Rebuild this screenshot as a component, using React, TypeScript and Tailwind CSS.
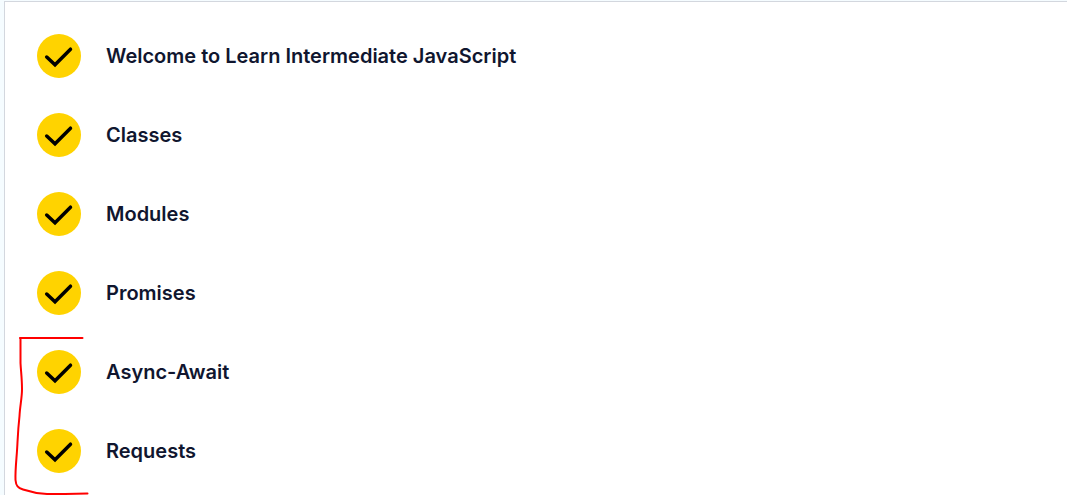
const modules: string[] = [
  'Welcome to Learn Intermediate JavaScript',
  'Classes',
  'Modules',
  'Promises',
  'Async-Await',
  'Requests',
];

function CheckBadge() {
  return (
    <svg className="size-11 shrink-0" viewBox="0 0 44 44" fill="none" role="img" aria-label="Completed">
      <circle cx="22" cy="22" r="22" fill="#ffd300" />
      <path
        d="M9.700 23L18 30.800L33.500 15.200"
        stroke="#000"
        strokeWidth="3.500"
        strokeLinecap="round"
        strokeLinejoin="miter"
      />
    </svg>
  );
}

function Bracket() {
  return (
    <svg
      className="pointer-events-none absolute top-[334px] left-2 h-[160px] w-20"
      viewBox="0 0 80 160"
      fill="none"
      stroke="#f00"
      strokeWidth="2"
      strokeLinecap="round"
      strokeLinejoin="round"
      aria-hidden="true"
    >
      <path d="M7 2H69.500" />
      <path d="M7.500 2V27C8 36 9 43 9 53C9 62 7 70 6.500 80C5.500 89 5 96 4.500 106C4 120 2 133 2.500 144C3 150 5 152 10 153.500C16 155.500 23 157.500 34 158H52L74.500 157.500" />
    </svg>
  );
}

export default function App() {
  return (
    <main className="min-h-screen bg-[#f5fcff] pt-px pl-1 font-['Inter',sans-serif]">
      <section className="relative border-t border-l border-[#d3d7de] bg-white px-8 pt-8 pb-[22px]">
        <ul className="flex flex-col gap-[35px]">
          {modules.map((title) => (
            <li key={title} className="flex items-center gap-[25px]">
              <CheckBadge />
              <h2 className="text-xl leading-8 font-semibold text-[#10162f]">{title}</h2>
            </li>
          ))}
        </ul>
        <Bracket />
      </section>
    </main>
  );
}
